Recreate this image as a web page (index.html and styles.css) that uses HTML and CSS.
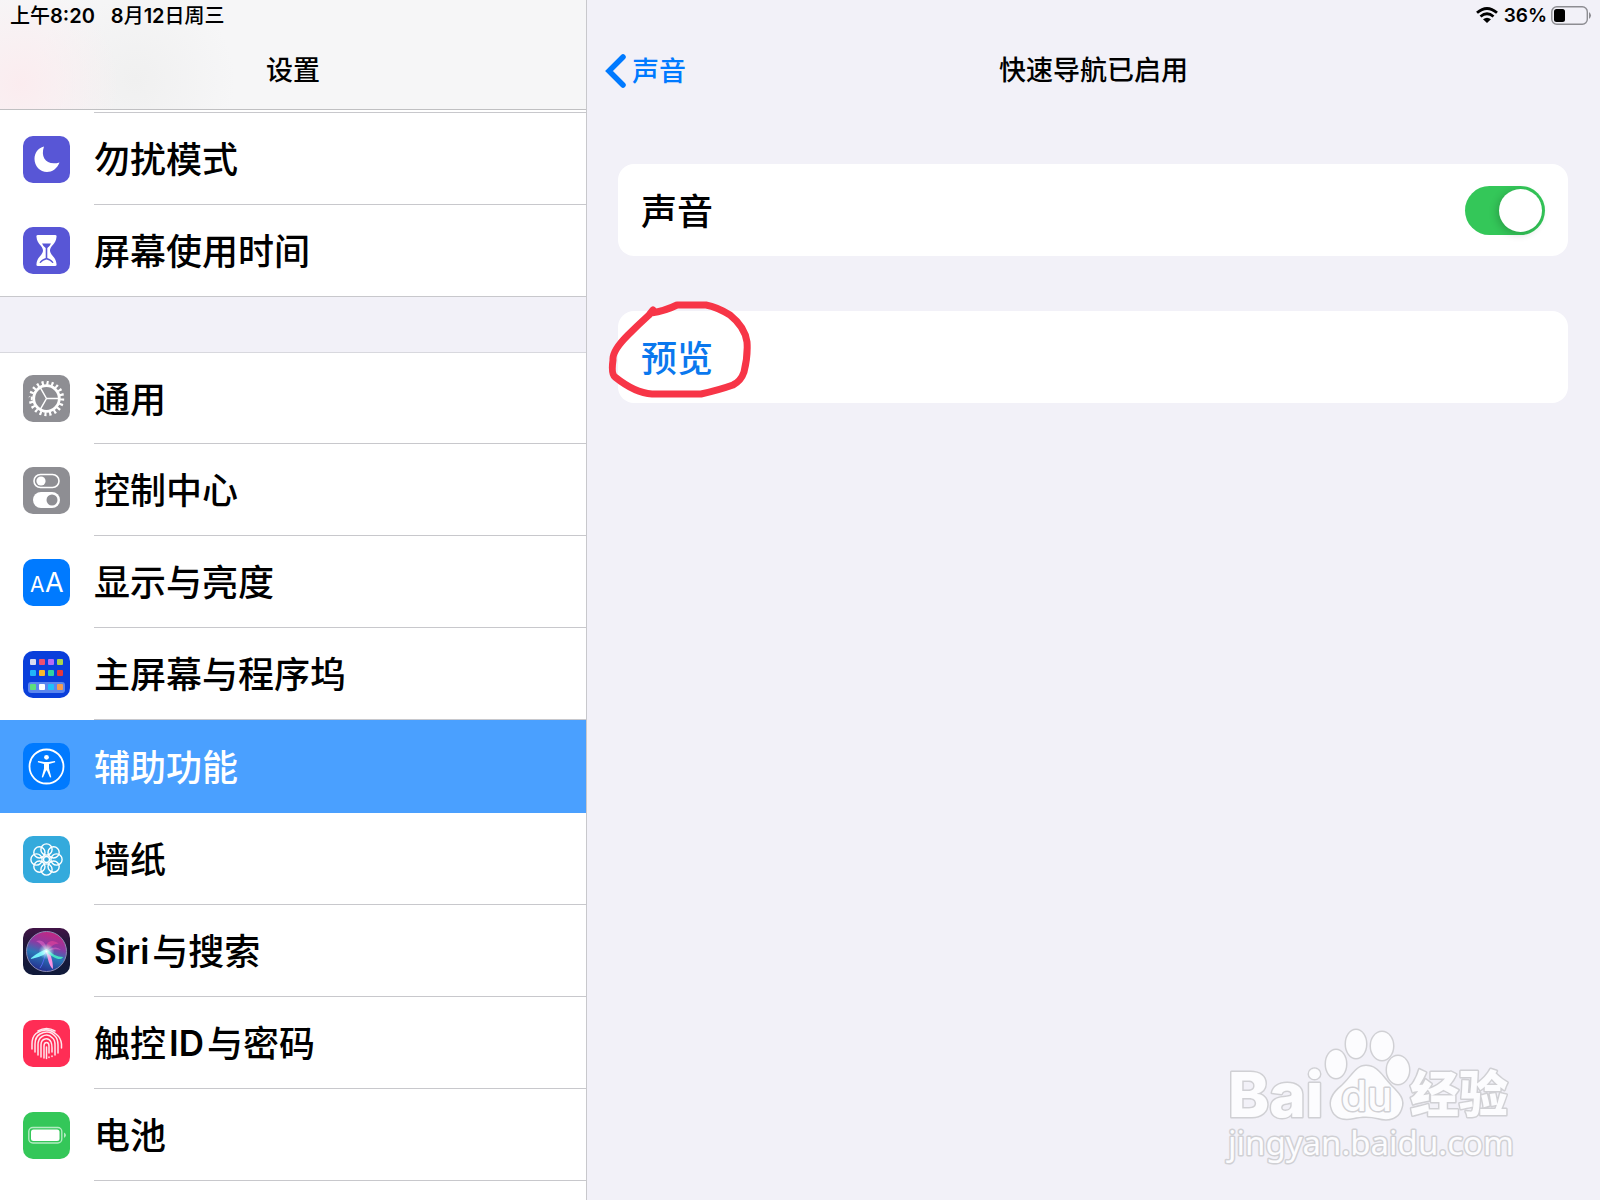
FILE: index.html
```html
<!DOCTYPE html>
<html lang="zh-CN">
<head>
<meta charset="utf-8">
<meta name="viewport" content="width=device-width, initial-scale=1">
<title>设置</title>
<link rel="stylesheet" href="styles.css">
</head>
<body>
<div class="app">
  <aside class="sidebar">
    <header class="bar bar-sidebar">
      <div class="status"><span>上午<b>8:20</b></span><span><b>8</b>月<b>12</b>日周三</span></div>
      <h1 class="title">设置</h1>
    </header>
    <nav aria-label="设置">
      <ul class="group group-first">
        <li><a class="row" href="#dnd">
          <svg class="icon" viewBox="0 0 47 47"><rect width="47" height="47" rx="10" fill="#5856d6"/><path d="M21 10.500C17 22 24 30 36.500 26.500C34 33 29 36 24 36C17 36 11.500 30 11.500 23C11.500 17 15 12 21 10.500Z" fill="#fff"/></svg>
          <span class="label">勿扰模式</span></a></li>
        <li><a class="row" href="#time">
          <svg class="icon" viewBox="0 0 47 47"><rect width="47" height="47" rx="10" fill="#5856d6"/><path d="M15 8H32Q34 8 33.500 10C33 17 27 19 27 23.500C27 28 33 30 33.500 37Q34 39 32 39H15Q13 39 13.500 37C14 30 20 28 20 23.500C20 19 14 17 13.500 10Q13 8 15 8Z" fill="#fff"/><path d="M19 16.500H28Q27 19 24.300 21V31C28 32 30 34 30.500 36H16.500C17 34 19 32 22.700 31V21Q20 19 19 16.500Z" fill="#5856d6"/><path d="M17.500 36Q20 33 23.500 32.500Q27 33 29.500 36Z" fill="#fff"/></svg>
          <span class="label">屏幕使用时间</span></a></li>
      </ul>
      <ul class="group">
        <li><a class="row" href="#general">
          <svg class="icon" viewBox="0 0 47 47"><rect width="47" height="47" rx="10" fill="#8e8e93"/><g fill="none" stroke="#fff"><circle cx="23.500" cy="23.500" r="12.800" stroke-width="2.800"/><circle cx="23.500" cy="23.500" r="15.700" stroke-width="4" pathLength="60" stroke-dasharray="1.300 1.700"/><path d="M23.500 23.500H36M23.500 23.500L17.300 12.700M23.500 23.500L17.300 34.300" stroke-width="1.500"/></g></svg>
          <span class="label">通用</span></a></li>
        <li><a class="row" href="#control">
          <svg class="icon" viewBox="0 0 47 47"><rect width="47" height="47" rx="10" fill="#8e8e93"/><rect x="11" y="7.500" width="25" height="13" rx="6.500" fill="none" stroke="#fff" stroke-width="1.600"/><circle cx="18" cy="14" r="4.600" fill="#fff"/><rect x="10" y="25" width="27" height="16" rx="8" fill="#fff"/><circle cx="29" cy="33" r="5.500" fill="#8e8e93"/></svg>
          <span class="label">控制中心</span></a></li>
        <li><a class="row" href="#display">
          <svg class="icon" viewBox="0 0 47 47"><rect width="47" height="47" rx="10" fill="#007aff"/><text x="7" y="33" class="small-a">A</text><text x="22" y="33" class="large-a">A</text></svg>
          <span class="label">显示与亮度</span></a></li>
        <li><a class="row" href="#home">
          <svg class="icon" viewBox="0 0 47 47"><rect width="47" height="47" rx="10" fill="#0a3fdb"/><rect x="5" y="31" width="37" height="11" rx="3" fill="#5b86ee"/>
            <g><rect x="7" y="8" width="6" height="6" rx="1" fill="#d8dcf0"/><rect x="16" y="8" width="6" height="6" rx="1" fill="#ee4f70"/><rect x="25" y="8" width="6" height="6" rx="1" fill="#b66cf6"/><rect x="34" y="8" width="6" height="6" rx="1" fill="#a9d64b"/><rect x="7" y="19" width="6" height="6" rx="1" fill="#20b5f8"/><rect x="16" y="19" width="6" height="6" rx="1" fill="#f8b92c"/><rect x="25" y="19" width="6" height="6" rx="1" fill="#32d3a3"/><rect x="34" y="19" width="6" height="6" rx="1" fill="#e8383d"/><rect x="7" y="33" width="6" height="6" rx="1" fill="#5de07d"/><rect x="16" y="33" width="6" height="6" rx="1" fill="#fff"/><rect x="25" y="33" width="6" height="6" rx="1" fill="#20c0fa"/><rect x="34" y="33" width="6" height="6" rx="1" fill="#f59b50"/></g></svg>
          <span class="label">主屏幕与程序坞</span></a></li>
        <li><a class="row row-selected" href="#accessibility" aria-current="page">
          <svg class="icon" viewBox="0 0 47 47"><rect width="47" height="47" rx="10" fill="#007aff"/><circle cx="23.500" cy="23.500" r="17" fill="none" stroke="#fff" stroke-width="1.800"/><circle cx="23.500" cy="14.300" r="2.400" fill="#fff"/><path d="M15 18L21.500 19H25.500L32 18L32.200 19.200L26 21V25.500L28.300 34.200L27 34.600L23.900 27.500H23.100L20 34.600L18.700 34.200L21 25.500V21L14.800 19.200Z" fill="#fff"/></svg>
          <span class="label">辅助功能</span></a></li>
        <li><a class="row" href="#wallpaper">
          <svg class="icon" viewBox="0 0 47 47"><rect width="47" height="47" rx="10" fill="#34aadc"/><g fill="none" stroke="#fff" stroke-width="1.400"><circle cx="33.500" cy="23.500" r="5.600"/><circle cx="30.600" cy="30.600" r="5.600"/><circle cx="23.500" cy="33.500" r="5.600"/><circle cx="16.400" cy="30.600" r="5.600"/><circle cx="13.500" cy="23.500" r="5.600"/><circle cx="16.400" cy="16.400" r="5.600"/><circle cx="23.500" cy="13.500" r="5.600"/><circle cx="30.600" cy="16.400" r="5.600"/><circle cx="23.500" cy="23.500" r="3"/><path d="M22.300 20.700L21 18M24.700 20.700L26 18M22.300 26.300L21 29M24.700 26.300L26 29M20.700 22.300L18 21M20.700 24.700L18 26M26.300 22.300L29 21M26.300 24.700L29 26" stroke-width="1"/></g></svg>
          <span class="label">墙纸</span></a></li>
        <li><a class="row" href="#siri">
          <svg class="icon" viewBox="0 0 47 47"><defs><linearGradient id="siri-back" x2="0" y2="1"><stop stop-color="#421447"/><stop offset=".4" stop-color="#1c1838"/><stop offset="1" stop-color="#101a3b"/></linearGradient><linearGradient id="siri-orb" x1=".65" y1="0" x2=".35" y2="1"><stop stop-color="#c8257f"/><stop offset=".35" stop-color="#8b3aa3"/><stop offset=".6" stop-color="#2a78b8"/><stop offset="1" stop-color="#252a8c"/></linearGradient><radialGradient id="siri-glow"><stop stop-color="#fff"/><stop offset="1" stop-color="#9ff" stop-opacity="0"/></radialGradient></defs><rect width="47" height="47" rx="10" fill="url(#siri-back)"/><circle cx="23.500" cy="23.500" r="20" fill="url(#siri-orb)" stroke="#8d8cb4"/><path d="M24 23C23 14 19 11 13 13C18 15 20 20 24 23C30 18 35 19 38 22C32 20 28 22 24 23Z" fill="#d45cbf" opacity=".7"/><path d="M24 21C15 24 11 28 7 31C14 30 19 28 24 25Z" fill="#73f0fa"/><path d="M23 23C25 31 26 38 30 41C30 33 28 27 25 22Z" fill="#fa93e2"/><path d="M24 21C29 26 34 29 40 29C38 34 29 29 23 24Z" fill="#45e0c3"/><path d="M23 24C21 31 20 36 17 40" stroke="#5266ed" fill="none"/><path d="M24 22C21 14 29 10 36 16C30 15 28 20 24 22Z" fill="#f8469b" opacity=".5"/><circle cx="23.500" cy="23.500" r="8" fill="url(#siri-glow)"/></svg>
          <span class="label"><span class="latin">Siri</span>与搜索</span></a></li>
        <li><a class="row" href="#touch">
          <svg class="icon" viewBox="0 0 47 47"><rect width="47" height="47" rx="10" fill="#ff2d55"/><g fill="none" stroke="#ffe8ed" stroke-width="1.500" stroke-linecap="round"><path d="M15 11Q23.500 6 32 11"/><path d="M9 29V24Q9 17 13 13.500Q23.500 6 33 14Q38 18 38.500 24V28"/><path d="M12 32V24Q12 17 17 14Q26 9 32 16Q35 19 35 25V33"/><path d="M15 35V25Q15 19 19 16.500Q25 13 29.500 18Q32 20 32 25V35"/><path d="M18 37V25Q18 20 22 19Q26 18 28 22Q29 24 29 28V32M29 36V36.500"/><path d="M21 38V26Q21 22.500 23.500 22.500Q26 22.500 26 26V33M26 37V37.500"/><path d="M23.500 27V38.500"/></g></svg>
          <span class="label">触控<span class="latin">ID</span>与密码</span></a></li>
        <li><a class="row" href="#battery">
          <svg class="icon" viewBox="0 0 47 47"><rect width="47" height="47" rx="10" fill="#34c759"/><rect x="5.800" y="15.500" width="33" height="15.500" rx="4" fill="none" stroke="#b4ebc2" stroke-width="1.400"/><rect x="8" y="17.500" width="28.500" height="11.500" rx="2.500" fill="#fff"/><path d="M41 20.500Q45 23.200 41 26Z" fill="#b4ebc2"/></svg>
          <span class="label">电池</span></a></li>
      </ul>
    </nav>
  </aside>
  <main class="detail">
    <header class="bar">
      <div class="status status-right">
        <svg class="wifi" viewBox="0 0 22 16" role="img" aria-label="Wi-Fi"><g fill="none" stroke="#000" stroke-width="2.800"><path d="M1 5.800Q11 -2.800 21 5.800"/><path d="M4.500 9.500Q11 4 17.500 9.500"/></g><path d="M7 12.300Q11 9 15 12.300L11 16Z"/></svg>
        <span>36%</span>
        <svg class="battery" viewBox="0 0 41 19" role="img" aria-label="电池 36%"><rect x=".8" y=".8" width="35.500" height="17.400" rx="5" fill="none" stroke="#8d8d92" stroke-width="1.400"/><rect x="3" y="3" width="11" height="13" rx="2.500"/><path d="M38 6Q42 9.500 38 13Z" fill="#8d8d92"/></svg>
      </div>
      <div class="navbar">
        <a class="back" href="#sounds"><svg class="chevron" viewBox="0 0 22 36" aria-hidden="true"><path d="M18 4L4 18L18 32" fill="none" stroke="#007aff" stroke-width="5.500" stroke-linecap="round"/></svg><span class="back-text">声音</span></a>
        <h2 class="title">快速导航已启用</h2>
      </div>
    </header>
    <div class="cards">
      <div class="card">
        <label class="card-label" for="sound">声音</label>
        <input class="switch" id="sound" type="checkbox" role="switch" checked>
      </div>
      <div class="card">
        <button class="preview" type="button">预览</button>
        <svg class="marker" viewBox="0 0 144 100" aria-hidden="true"><path d="M46 11L42 16Q31 26 21 36Q5 52 6 61Q4 75 8 78Q28 94 45 95H94Q112 91 126 86Q134 82 137 73Q141 57 140 43Q138 28 123 16Q110 8 99 6H70Q58 12 44 14" fill="none" stroke="#f73547" stroke-width="7" stroke-linecap="round" stroke-linejoin="round"/></svg>
      </div>
    </div>
    <svg class="watermark" viewBox="0 0 300 150" role="img" aria-label="Baidu 经验">
      <g class="mark">
        <text x="4" y="97" class="wm-bai">Bai</text>
        <ellipse cx="112" cy="44" rx="10" ry="14"/><ellipse cx="132" cy="24" rx="10" ry="14"/><ellipse cx="158" cy="26" rx="11" ry="14"/><ellipse cx="174" cy="50" rx="11" ry="14"/>
        <path d="M142 46C132 46 128 57 118 66C109 73 105 81 108 89C111 98 120 100 129 98C138 96 146 96 154 98C165 101 174 98 177 89C181 79 174 73 167 66C157 55 153 46 142 46Z"/>
        <text x="117" y="91" class="wm-du">du</text>
        <text x="186" y="92" class="wm-cn">经验</text>
        <text x="4" y="135" class="wm-url">jingyan.baidu.com</text>
      </g>
    </svg>
  </main>
</div>
</body>
</html>
```
FILE: styles.css
```css
* { box-sizing: border-box; }

body {
  margin: 0;
  background: #f2f1f8;
  color: #000;
  font-family: Inter, "Noto Sans CJK SC", sans-serif;
  font-weight: 500;
}

a { color: inherit; text-decoration: none; }

.app {
  display: grid;
  grid-template-columns: 587fr 1013fr;
  height: 100vh;
  overflow: hidden;
}

.sidebar {
  border-right: 1px solid #c8c8cc;
  background: #fff;
  overflow: hidden;
}

.bar { height: 110px; }

.bar-sidebar {
  border-bottom: 1px solid #c0c0c2;
  background:
    radial-gradient(circle at 20px 84px, #fbecef 0, #fbecef00 100px),
    radial-gradient(circle at 135px 80px, #f0f0f0 0, #f0f0f000 100px),
    #f6f6f7;
}

.status {
  display: flex;
  align-items: center;
  gap: 16px;
  height: 32px;
  padding: 0 10px 3px;
  font-size: 20px;
}

.status b { font-weight: 600; }

.status-right {
  justify-content: flex-end;
  gap: 4px;
  padding: 0 8px 2px;
  font-size: 19px;
  font-weight: 600;
}

.wifi { width: 22px; height: 16px; margin-right: 2px; }
.battery { width: 41px; height: 19px; }

.title {
  margin: 0;
  font-size: 27px;
  font-weight: 500;
  line-height: 78px;
  text-align: center;
}

.group {
  margin: 0;
  padding: 0;
  background: #fff;
  list-style: none;
}

.group + .group {
  margin-top: 55px;
  border-top: 1px solid #d8d8de;
}

.sidebar nav { background: #f2f1f8; }

.group-first {
  padding-top: 2px;
  border-bottom: 1px solid #c8c8cc;
}

.group-first::before {
  content: "";
  display: block;
  height: 1px;
  margin-left: 94px;
  background: #c8c8cc;
}

.row {
  display: flex;
  align-items: center;
  gap: 24px;
  height: 92px;
  padding-left: 23px;
}

.icon { flex: none; width: 47px; height: 47px; }

.label {
  display: flex;
  flex: 1;
  align-items: center;
  gap: 3px;
  height: 100%;
  padding-bottom: 3px;
  border-bottom: 1px solid #c8c8cc;
  font-size: 36px;
}

.group-first li:last-child .row { height: 91px; }
.group-first li:last-child .label { border-color: transparent; }
.group + .group li:first-child .row { height: 91px; }

.latin {
  padding-top: 3px;
  font-size: 35px;
  font-weight: 600;
}

.row-selected {
  height: 93px;
  background: #4aa0ff;
  color: #fff;
}

.row-selected .label { border-color: transparent; }

.small-a, .large-a { fill: #fff; font-size: 21px; font-weight: 400; }
.large-a { font-size: 27px; }

.detail { position: relative; }

.navbar {
  display: grid;
  grid-template-columns: 1fr auto 1fr;
  align-items: center;
  padding: 0 18px;
}

.back {
  display: flex;
  align-items: center;
  gap: 5px;
  color: #007aff;
  font-size: 27px;
}

.back-text { padding-bottom: 4px; }
.chevron { width: 22px; height: 36px; }

.cards {
  display: flex;
  flex-direction: column;
  gap: 55px;
  padding: 54px 32px 0 31px;
}

.card {
  position: relative;
  display: flex;
  align-items: center;
  justify-content: space-between;
  height: 92px;
  padding: 0 23px;
  border-radius: 16px;
  background: #fff;
  font-size: 36px;
}

.card-label { padding-bottom: 3px; }

.switch {
  appearance: none;
  display: flex;
  align-items: center;
  justify-content: flex-end;
  width: 80px;
  height: 49px;
  margin: 0;
  padding: 3px;
  border-radius: 25px;
  background: #34c759;
}

.switch::before {
  content: "";
  width: 43px;
  height: 43px;
  border-radius: 50%;
  background: #fff;
  box-shadow: -2px 2px 8px #0003;
}

.switch:not(:checked) { justify-content: flex-start; background: #e5e5ea; }

.preview {
  flex: 1;
  height: 100%;
  padding: 0 0 3px;
  border: 0;
  background: none;
  color: #0a78ee;
  font: inherit;
  text-align: left;
}

.marker {
  position: absolute;
  top: -12px;
  left: -11px;
  width: 144px;
  height: 100px;
  pointer-events: none;
}

.watermark {
  position: absolute;
  right: 76px;
  bottom: 30px;
  width: 300px;
  height: 150px;
}

.mark {
  fill: #fcfcfe;
  stroke: #d0d0d4;
  stroke-width: 3px;
  stroke-linejoin: round;
  paint-order: stroke;
}

.wm-bai { font-size: 62px; font-weight: 800; }
.wm-du { font-size: 42px; font-weight: 500; }
.wm-cn { font-size: 49px; font-weight: 900; }
.wm-url { font-family: "Noto Sans", sans-serif; font-size: 33px; font-weight: 400; }
```
